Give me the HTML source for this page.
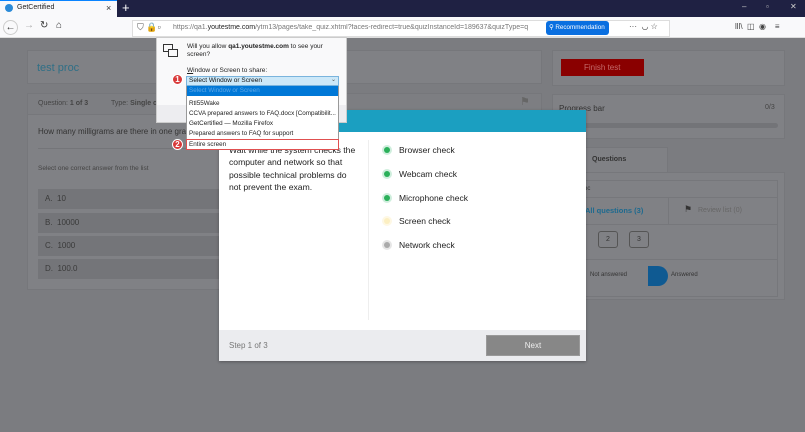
<!DOCTYPE html>
<html><head><meta charset="utf-8"><style>
*{margin:0;padding:0;box-sizing:border-box}
body{width:805px;height:432px;overflow:hidden;font-family:"Liberation Sans",sans-serif;background:#7b7c80;position:relative;font-size:8px}
.a{position:absolute}
.t{position:absolute;white-space:nowrap}
.card{position:absolute;background:#808185;border:1px solid #76777b}
.opt{position:absolute;left:38px;width:500px;height:20px;background:#747579;color:#3a3a3a;font-size:8px;line-height:20px;padding-left:7px}
.dot{position:absolute;left:384px;width:6px;height:6px;border-radius:50%}
.lbl{position:absolute;left:399px;font-size:8.5px;color:#222;white-space:nowrap}
.li{position:absolute;left:189px;font-size:6.3px;color:#222;white-space:nowrap;overflow:hidden;width:148px}
.badge{position:absolute;left:172px;width:11px;height:11px;border-radius:50%;background:#d93a3a;color:#fff;font-size:8px;font-weight:bold;text-align:center;line-height:10px;border:1px solid #fff}
</style></head><body>
<div class="a" style="left:0;top:0;width:805px;height:17px;background:#1f2143"></div>
<div class="a" style="left:0;top:0;width:117px;height:17px;background:#f9f9fb;border-top:1px solid #0a84ff"></div>
<div class="a" style="left:5px;top:4px;width:8px;height:8px;border-radius:50%;background:#2a8ad8"></div>
<div class="t" style="left:17px;top:4px;font-size:7px;color:#222">GetCertified</div>
<div class="t" style="left:106px;top:3px;font-size:9px;color:#333">×</div>
<div class="t" style="left:122px;top:0;font-size:13px;color:#fff">+</div>
<div class="t" style="left:742px;top:2px;font-size:8px;color:#ccc">–</div>
<div class="t" style="left:766px;top:2px;font-size:8px;color:#ccc">▫</div>
<div class="t" style="left:790px;top:2px;font-size:8px;color:#ccc">✕</div>

<div class="a" style="left:0;top:17px;width:805px;height:21px;background:#f9f9fb;border-bottom:1px solid #ddd"></div>
<div class="a" style="left:3px;top:20px;width:15px;height:15px;border-radius:50%;border:1px solid #ccc;font-size:10px;text-align:center;line-height:13px;color:#333">←</div>
<div class="t" style="left:24px;top:20px;font-size:10px;color:#aaa">→</div>
<div class="t" style="left:40px;top:20px;font-size:10px;color:#333">↻</div>
<div class="t" style="left:56px;top:20px;font-size:10px;color:#333">⌂</div>
<div class="a" style="left:132px;top:20px;width:538px;height:17px;background:#fff;border:1px solid #ddd"></div>
<div class="t" style="left:137px;top:22px;font-size:9px;color:#555">⛉ 🔒▫</div>
<div class="t" style="left:173px;top:24px;font-size:7px;color:#777;width:372px;overflow:hidden">https://qa1.<span style="color:#222">youtestme.com</span>/ytm13/pages/take_quiz.xhtml?faces-redirect=true&amp;quizInstanceId=189637&amp;quizType=q</div>
<div class="a" style="left:546px;top:21px;width:63px;height:14px;background:#0a6fe0;border-radius:3px"></div>
<div class="t" style="left:549px;top:24px;font-size:6.3px;color:#fff">⚲ Recommendation</div>
<div class="t" style="left:629px;top:22px;font-size:8px;color:#444">···&nbsp; ◡ ☆</div>
<div class="t" style="left:735px;top:22px;font-size:8px;color:#444">lll\ &nbsp;◫ &nbsp;◉ &nbsp;&nbsp;&nbsp;≡</div>

<div class="card" style="left:27px;top:50px;width:515px;height:34px"></div>
<div class="t" style="left:37px;top:62px;font-size:11px;color:#2f6f86">test proc</div>
<div class="card" style="left:27px;top:93px;width:515px;height:197px"></div>
<div class="a" style="left:28px;top:94px;width:513px;height:21px;background:#7d7e82;border-bottom:1px solid #76777b"></div>
<div class="t" style="left:38px;top:100px;font-size:7px;color:#444">Question: <b>1 of 3</b></div>
<div class="t" style="left:111px;top:100px;font-size:7px;color:#444">Type: <b>Single ch</b></div>
<div class="t" style="left:520px;top:95px;font-size:11px;color:#666">⚑</div>
<div class="t" style="left:38px;top:127px;font-size:8px;color:#333">How many milligrams are there in one gra</div>
<div class="a" style="left:38px;top:148px;width:500px;height:1px;background:#747579"></div>
<div class="t" style="left:38px;top:165px;font-size:6.5px;color:#444">Select one correct answer from the list</div>
<div class="opt" style="top:189px">A.&nbsp;&nbsp;10</div>
<div class="opt" style="top:213px">B.&nbsp;&nbsp;10000</div>
<div class="opt" style="top:236px">C.&nbsp;&nbsp;1000</div>
<div class="opt" style="top:259px">D.&nbsp;&nbsp;100.0</div>

<div class="card" style="left:552px;top:50px;width:233px;height:36px"></div>
<div class="a" style="left:561px;top:59px;width:83px;height:17px;background:#8a0000"></div>
<div class="t" style="left:584px;top:63px;font-size:8px;color:#c46a6a">Finish test</div>
<div class="card" style="left:552px;top:94px;width:233px;height:45px"></div>
<div class="t" style="left:559px;top:104px;font-size:8px;color:#333">Progress bar</div>
<div class="t" style="left:765px;top:104px;font-size:7px;color:#444">0/3</div>
<div class="a" style="left:560px;top:123px;width:218px;height:5px;border-radius:3px;background:#737478"></div>
<div class="a" style="left:555px;top:147px;width:113px;height:26px;background:#808185;border:1px solid #76777b;border-bottom:none"></div>
<div class="t" style="left:592px;top:156px;font-size:7px;color:#333;font-weight:bold">Questions</div>
<div class="card" style="left:552px;top:172px;width:233px;height:128px"></div>
<div class="a" style="left:558px;top:180px;width:220px;height:117px;border:1px solid #76777b"></div>
<div class="t" style="left:584px;top:186px;font-size:6px;color:#333">oc</div>
<div class="a" style="left:558px;top:197px;width:220px;height:1px;background:#76777b"></div>
<div class="a" style="left:668px;top:197px;width:1px;height:27px;background:#76777b"></div>
<div class="t" style="left:585px;top:206px;font-size:7.5px;color:#1d6a8f;font-weight:bold">All questions (3)</div>
<div class="t" style="left:684px;top:204px;font-size:9px;color:#333">⚑</div>
<div class="t" style="left:698px;top:207px;font-size:7px;color:#666">Review list (0)</div>
<div class="a" style="left:558px;top:224px;width:220px;height:1px;background:#76777b"></div>
<div class="a" style="left:598px;top:231px;width:20px;height:17px;border:1px solid #555;border-radius:3px;font-size:7px;text-align:center;line-height:15px;color:#333">2</div>
<div class="a" style="left:629px;top:231px;width:20px;height:17px;border:1px solid #555;border-radius:3px;font-size:7px;text-align:center;line-height:15px;color:#333">3</div>
<div class="a" style="left:558px;top:259px;width:220px;height:1px;background:#76777b"></div>
<div class="t" style="left:590px;top:272px;font-size:6px;color:#333">Not answered</div>
<div class="a" style="left:648px;top:266px;width:20px;height:20px;background:#0f5a92;border-radius:0 10px 10px 0"></div>
<div class="t" style="left:671px;top:272px;font-size:6px;color:#333">Answered</div>

<div class="a" style="left:219px;top:110px;width:367px;height:251px;background:#fff;box-shadow:0 1px 3px rgba(0,0,0,.3)"></div>
<div class="a" style="left:219px;top:110px;width:367px;height:22px;background:#1b9fc1"></div>
<div class="a" style="left:229px;top:144px;width:150px;font-size:8.6px;line-height:12.3px;color:#222">Wait while the system checks the<br>computer and network so that<br>possible technical problems do<br>not prevent the exam.</div>
<div class="a" style="left:368px;top:140px;width:1px;height:180px;background:#eee"></div>
<div class="dot" style="top:147px;background:#2bb05a;box-shadow:0 0 0 2px #cfeedd"></div><div class="lbl" style="top:145px">Browser check</div>
<div class="dot" style="top:171px;background:#2bb05a;box-shadow:0 0 0 2px #cfeedd"></div><div class="lbl" style="top:169px">Webcam check</div>
<div class="dot" style="top:195px;background:#2bb05a;box-shadow:0 0 0 2px #cfeedd"></div><div class="lbl" style="top:193px">Microphone check</div>
<div class="dot" style="top:218px;background:#fcefc2;box-shadow:0 0 0 2px #fef8e4"></div><div class="lbl" style="top:216px">Screen check</div>
<div class="dot" style="top:242px;background:#aaa;box-shadow:0 0 0 2px #e6e6e6"></div><div class="lbl" style="top:240px">Network check</div>
<div class="a" style="left:219px;top:330px;width:367px;height:31px;background:#ebecef"></div>
<div class="t" style="left:229px;top:341px;font-size:8px;color:#777">Step 1 of 3</div>
<div class="a" style="left:486px;top:335px;width:94px;height:21px;background:#878787;border:1px solid #999;color:#eee;font-size:8px;text-align:center;line-height:19px">Next</div>

<div class="a" style="left:156px;top:37px;width:191px;height:86px;background:#f9f9fa;border:1px solid #ccc"></div>
<div class="a" style="left:156px;top:105px;width:191px;height:18px;background:#ededf0;border:1px solid #ccc;border-top:none"></div>
<div class="a" style="left:163px;top:44px;width:10px;height:8px;border:1.5px solid #333"></div>
<div class="a" style="left:168px;top:49px;width:10px;height:8px;border:1.5px solid #333;background:#f9f9fa"></div>
<div class="t" style="left:187px;top:43px;font-size:6.5px;color:#222;line-height:8px">Will you allow <b>qa1.youtestme.com</b> to see your<br>screen?</div>
<div class="t" style="left:187px;top:67px;font-size:6.5px;color:#222"><u>W</u>indow or Screen to share:</div>
<div class="a" style="left:186px;top:76px;width:153px;height:10px;background:#cce8f8;border:1px solid #7ab4dd"></div>
<div class="t" style="left:189px;top:77px;font-size:6.5px;color:#111">Select Window or Screen</div>
<div class="t" style="left:331px;top:76px;font-size:6px;color:#555">⌄</div>
<div class="a" style="left:186px;top:86px;width:153px;height:64px;background:#fff;border:1px solid #999"></div>
<div class="a" style="left:187px;top:86px;width:151px;height:10px;background:#0078d7"></div>
<div class="li" style="top:87px;color:#5fa8e6">Select Window or Screen</div>
<div class="li" style="top:100px">Rtl55Wake</div>
<div class="li" style="top:110px">CCVA prepared answers to FAQ.docx [Compatibilit...</div>
<div class="li" style="top:120px">GetCertified — Mozilla Firefox</div>
<div class="li" style="top:130px">Prepared answers to FAQ for support</div>
<div class="a" style="left:186px;top:139px;width:153px;height:11px;border:1px solid #e05050"></div>
<div class="li" style="top:141px">Entire screen</div>
<div class="badge" style="top:74px">1</div>
<div class="badge" style="top:139px">2</div>
</body></html>
